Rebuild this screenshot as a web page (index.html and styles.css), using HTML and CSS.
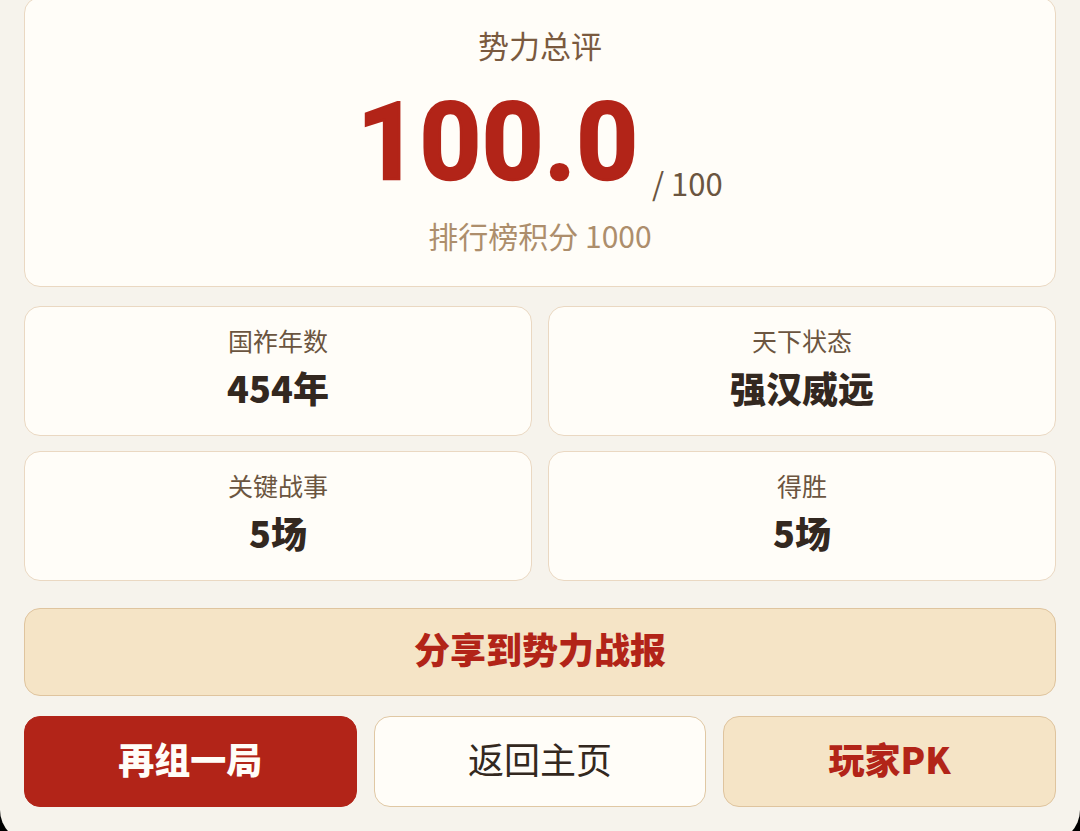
FILE: index.html
```html
<!DOCTYPE html>
<html lang="zh-CN">
<head>
<meta charset="utf-8">
<link rel="stylesheet" href="styles.css">
</head>
<body>
<main class="page">
  <section class="summary card">
    <div class="summary-title">势力总评</div>
    <div class="score-row">
      <span class="score">100.0</span>
      <span class="score-max">/ 100</span>
    </div>
    <div class="rank">排行榜积分 1000</div>
  </section>

  <section class="stats">
    <div class="stat card">
      <div class="stat-label">国祚年数</div>
      <div class="stat-value">454年</div>
    </div>
    <div class="stat card">
      <div class="stat-label">天下状态</div>
      <div class="stat-value">强汉威远</div>
    </div>
    <div class="stat card">
      <div class="stat-label">关键战事</div>
      <div class="stat-value">5场</div>
    </div>
    <div class="stat card">
      <div class="stat-label">得胜</div>
      <div class="stat-value">5场</div>
    </div>
  </section>

  <button class="btn btn-share">分享到势力战报</button>

  <div class="actions">
    <button class="btn btn-primary">再组一局</button>
    <button class="btn btn-plain">返回主页</button>
    <button class="btn btn-tan">玩家PK</button>
  </div>
</main>
<div class="screen-frame"></div>
</body>
</html>
```

FILE: styles.css
```css
* { box-sizing: border-box; }
html, body {
  margin: 0;
  padding: 0;
  background: #f6f3ec;
  height: 831px;
  overflow: hidden;
  font-family: "Noto Sans CJK SC", "Noto Sans", sans-serif;
}
.page {
  padding: 0 24px;
  display: flex;
  flex-direction: column;
}
.card {
  background: #fffdf8;
  border: 1px solid #ead8c2;
  border-radius: 16px;
}
.summary {
  margin-top: -3px;
  height: 290px;
  display: flex;
  flex-direction: column;
  align-items: center;
  padding-top: 27px;
}
.summary-title {
  font-size: 31px;
  line-height: 40px;
  color: #7a5a3f;
}
.score-row {
  display: flex;
  align-items: baseline;
  margin-top: 18px;
  height: 120px;
}
.score {
  font-family: Roboto, "Noto Sans", sans-serif;
  font-weight: 700;
  font-size: 107px;
  line-height: 120px;
  letter-spacing: 1px;
  color: #b22418;
  -webkit-text-stroke: 2.5px #b22418;
}
.score-max {
  font-family: "Noto Sans CJK SC", "Noto Sans", sans-serif;
  font-size: 31px;
  color: #6b5540;
  margin-left: 13px;
  position: relative;
  top: 17px;
}
.rank {
  margin-top: 12px;
  font-size: 30px;
  line-height: 40px;
  color: #ad8e6c;
}
.stats {
  margin-top: 19px;
  display: grid;
  grid-template-columns: 1fr 1fr;
  column-gap: 16px;
  row-gap: 15px;
}
.stat {
  height: 130px;
  display: flex;
  flex-direction: column;
  align-items: center;
  padding-top: 16px;
}
.stat-label {
  font-size: 25px;
  line-height: 34px;
  color: #6b5540;
}
.stat-value {
  margin-top: 8px;
  font-size: 36px;
  line-height: 44px;
  font-weight: 900;
  color: #332820;
}
.btn {
  font-family: "Noto Sans CJK SC", sans-serif;
  border-radius: 16px;
  font-size: 36px;
  line-height: 44px;
  padding: 0 0 8px;
  cursor: pointer;
}
.btn-share {
  margin-top: 27px;
  height: 88px;
  background: #f5e4c6;
  border: 1px solid #dfc49e;
  color: #b22418;
  font-weight: 900;
}
.actions {
  margin-top: 20px;
  display: grid;
  grid-template-columns: 1fr 1fr 1fr;
  column-gap: 17px;
}
.actions .btn {
  height: 91px;
}
.btn-primary {
  background: #b22418;
  border: 1px solid #b22418;
  color: #fffdf8;
  font-weight: 900;
}
.btn-plain {
  background: #fffdf8;
  border: 1px solid #e0c8a4;
  color: #332820;
  font-weight: 400;
}
.btn-tan {
  background: #f5e4c6;
  border: 1px solid #dfc49e;
  color: #b22418;
  font-weight: 900;
}
.screen-frame {
  position: fixed;
  left: 0;
  right: 0;
  top: 0;
  height: 842px;
  border-radius: 0 0 32px 32px;
  box-shadow: 0 0 0 60px #000;
  pointer-events: none;
}
```
